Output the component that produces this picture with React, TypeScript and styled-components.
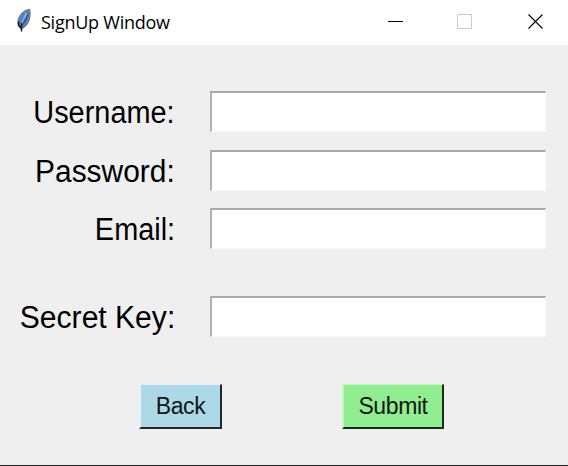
import React from "react";
import styled, { createGlobalStyle } from "styled-components";

const GlobalStyle = createGlobalStyle`
  * { box-sizing: border-box; }
  body { margin: 0; background: #efefef; overflow: hidden; }
`;

const Window = styled.main`
  width: 568px;
  height: 466px;
  display: flex;
  flex-direction: column;
  background: #efefef;
  border-bottom: 1px solid #262626;
  color: #000;
`;

const TitleBar = styled.header`
  height: 45px;
  flex: none;
  display: flex;
  align-items: flex-start;
  background: #fff;
  padding-left: 16px;
`;

const Feather = styled.svg`
  width: 16px;
  height: 26px;
  margin-top: 8px;
  flex: none;
`;

const Title = styled.h1<{ $spacing: number }>`
  margin: 0 auto 0 9px;
  font: 400 18px/45px "Open Sans", sans-serif;
  letter-spacing: ${(p) => p.$spacing}px;
  white-space: nowrap;
`;

const Controls = styled.div`
  display: flex;
  gap: 54px;
  padding: 14px 24px 0 0;
  svg { display: block; }
  svg:last-child { margin-left: 2px; }
`;

const Form = styled.div`
  padding-top: 46px;
`;

const Row = styled.label<{ $gap: number }>`
  display: grid;
  grid-template-columns: 175px 336px;
  column-gap: 35px;
  height: 41px;
  margin-bottom: ${(p) => p.$gap}px;
`;

const Caption = styled.span<{ $stretch: number }>`
  justify-self: end;
  padding-top: 1px;
  font: 400 31px/41px "Liberation Sans", Arial, sans-serif;
  transform: scaleX(${(p) => p.$stretch});
  transform-origin: right center;
  white-space: nowrap;
`;

const Field = styled.input`
  width: 336px;
  height: 41px;
  border: solid;
  border-width: 2px 1px 1px 2px;
  border-color: #a9a9a9 #f8f8f8 #f8f8f8 #b2b2b2;
  border-radius: 0;
  outline: none;
  background: #fff;
  font: 28px "Liberation Sans", Arial, sans-serif;
`;

const Actions = styled.div`
  display: flex;
  gap: 120px;
  padding: 47px 0 0 139px;
`;

const Action = styled.button<{ $fill: string; $light: string; $dark: string; $width: number; $spacing: number }>`
  width: ${(p) => p.$width}px;
  height: 45px;
  padding: 0;
  border: solid;
  border-width: 1px 2px 2px 2px;
  border-color: ${(p) => p.$light} ${(p) => p.$dark} ${(p) => p.$dark} ${(p) => p.$light};
  background: ${(p) => p.$fill};
  color: #101515;
  font: 400 23px/41px "Liberation Sans", Arial, sans-serif;
  letter-spacing: ${(p) => p.$spacing}px;
`;

const fields = [
  { name: "Username:", stretch: 0.932, gap: 18 },
  { name: "Password:", stretch: 0.965, gap: 17 },
  { name: "Email:", stretch: 0.932, gap: 47 },
  { name: "Secret Key:", stretch: 0.97, gap: 0 },
];

export default function App() {
  return (
    <>
      <GlobalStyle />
      <Window>
        <TitleBar>
          <Feather viewBox="0 0 16 26">
            <path d="M13.4 1.5C8 2 3.2 7.5 2.2 12.5c-.5 3 .4 6 2.8 8 4.6-1.6 7.4-5.5 8.6-11 .6-3 .5-5.7-.2-8Z" fill="#4f86c4" stroke="#747b80" strokeWidth="1.5" />
            <path d="M10.5 5 5.5 16.5" stroke="#7fb0ec" strokeWidth="2" />
            <path d="M12.5 4.5C12.5 10 9 15 5.5 19l1-4 4.5-8Z" fill="#35587f" />
            <path d="M2.6 13.5v4l2.8 2.5M5.5 15v8.5" fill="none" stroke="#17202a" strokeWidth="1.5" />
          </Feather>
          <Title $spacing={-0.25}>SignUp Window</Title>
          <Controls>
            <svg width="15" height="15" shapeRendering="crispEdges"><path d="M0 7.5h15" stroke="#000" /></svg>
            <svg width="15" height="15" shapeRendering="crispEdges"><path d="M.5.5h14v14H.5Z" fill="none" stroke="#ccc" /></svg>
            <svg width="16" height="15"><path d="m.5.5 14 14m0-14-14 14" stroke="#000" strokeWidth="1.1" /></svg>
          </Controls>
        </TitleBar>
        <Form>
          {fields.map((f) => (
            <Row key={f.name} $gap={f.gap}>
              <Caption $stretch={f.stretch}>{f.name}</Caption>
              <Field type="text" />
            </Row>
          ))}
          <Actions>
            <Action $fill="#add8e6" $light="#e2f4fb" $dark="#20282b" $width={83} $spacing={-0.4}>Back</Action>
            <Action $fill="#90ee90" $light="#bdfbbd" $dark="#1b2b1b" $width={102} $spacing={-0.4}>Submit</Action>
          </Actions>
        </Form>
      </Window>
    </>
  );
}
